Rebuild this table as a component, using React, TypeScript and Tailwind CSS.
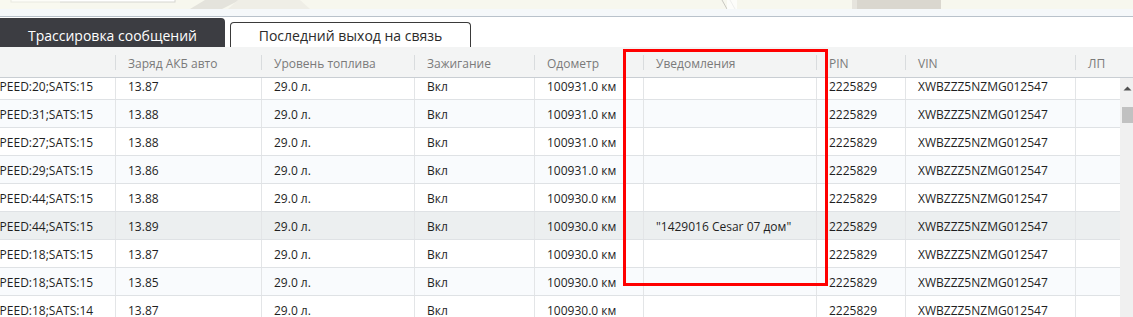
const cols = [
  { label: "", w: "w-[115px]" },
  { label: "Заряд АКБ авто", w: "w-[146px]" },
  { label: "Уровень топлива", w: "w-[153px]" },
  { label: "Зажигание", w: "w-[120px]" },
  { label: "Одометр", w: "w-[109px]" },
  { label: "Уведомления", w: "w-[173px]" },
  { label: "PIN", w: "w-[89px]" },
  { label: "VIN", w: "w-[170px]" },
  { label: "ЛП", w: "w-[45px]" },
];

const rows = [
  ["SPEED:20;SATS:15", "13.87", "100931.0 км", ""],
  ["SPEED:31;SATS:15", "13.88", "100931.0 км", ""],
  ["SPEED:27;SATS:15", "13.88", "100931.0 км", ""],
  ["SPEED:29;SATS:15", "13.86", "100931.0 км", ""],
  ["SPEED:44;SATS:15", "13.88", "100930.0 км", ""],
  ["SPEED:44;SATS:15", "13.89", "100930.0 км", "\"1429016 Cesar 07 дом\""],
  ["SPEED:18;SATS:15", "13.87", "100930.0 км", ""],
  ["SPEED:18;SATS:15", "13.85", "100930.0 км", ""],
  ["SPEED:18;SATS:14", "13.87", "100930.0 км", ""],
];

const MapStrip = () => (
  <svg width="1133" height="9" className="block">
    <rect width="1133" height="9" fill="#f7f7ee" />
    <rect x="11" y="-4" width="164" height="6" fill="#ffffff" stroke="#d6d6d0" />
    <path d="M190 9 L205 0 L240 0 L222 9 Z" fill="#e4e3dc" />
    <path d="M228 9 L238 0 L300 0 L310 9 Z" fill="#efeee6" />
    <path d="M722 0 L727 9 M730 0 L735 9" stroke="#c9c8c2" strokeWidth="1" />
    <rect x="727" y="0" width="10" height="9" fill="#ffffff" opacity="0.7" />
    <rect x="852" y="0" width="5" height="9" fill="#e6e4dd" />
    <rect x="857" y="0" width="84" height="9" fill="#dad7cf" />
    <rect x="0" y="0" width="60" height="9" fill="#fbfbf2" opacity="0.5" />
  </svg>
);

const App = () => {
  return (
    <div className="relative w-[1133px] h-[317px] overflow-hidden bg-white font-['Open_Sans',sans-serif]">
      <MapStrip />
      <div className="h-[8px] bg-[#f5f8fa] border-b border-[#b9c2cb]" />

      <div className="h-[30px] flex items-end">
        <div className="w-[225px] h-[29px] pt-[5px] bg-[#3c3d42] rounded-tr-[4px] flex items-center justify-center text-white text-[14px]">
          Трассировка сообщений
        </div>
        <div className="ml-[5px] w-[241px] h-[25px] pt-[1px] bg-white border border-b-0 border-[#3a3a3a] rounded-t-[4px] flex items-center justify-center text-[#2b2b2b] text-[14px]">
          Последний выход на связь
        </div>
      </div>

      <div className="h-[31px] flex items-center bg-[#f3f4f4] border-b border-[#c9ced3] text-[12px] text-[#7a7a7a]">
        {cols.map((c, i) => (
          <div key={i} className={`${c.w} h-full flex items-center shrink-0`}>
            {i > 0 && <div className="w-px h-[15px] bg-[#d9dcde] shrink-0" />}
            <span className="pl-3 pt-[3px] whitespace-nowrap">{c.label}</span>
          </div>
        ))}
      </div>

      <div className="flex h-[239px]">
        <div className="w-[1120px] overflow-hidden">
          <div className="-mt-[6px]">
            {rows.map((r, ri) => (
              <div
                key={ri}
                className={`flex h-[28px] border-b border-[#dfe2e5] text-[12px] text-[#1f1f1f] ${
                  ri === 5 ? "bg-[#eceff0]" : ri % 2 === 1 ? "bg-[#f9fbfd]" : "bg-white"
                }`}
              >
                {[r[0], r[1], "29.0 л.", "Вкл", r[2], r[3], "2225829", "XWBZZZ5NZMG012547", ""].map((v, ci) => (
                  <div
                    key={ci}
                    className={`${cols[ci].w} shrink-0 h-full flex items-center overflow-hidden whitespace-nowrap pt-[3px] ${
                      ci > 0 ? "border-l border-[#e3e5e7] pl-3" : ""
                    }`}
                  >
                    <span className={ci === 0 ? "-ml-[7px]" : ""}>{v}</span>
                  </div>
                ))}
              </div>
            ))}
          </div>
        </div>

        <div className="w-[13px] bg-[#f0f0f0] flex flex-col items-start">
          <div className="w-full h-[20px] flex items-center justify-end pr-[1px]">
            <svg width="9" height="5" viewBox="0 0 9 5">
              <path d="M0.5 4.5 L4.5 0.5 L8.5 4.5 Z" fill="#505050" />
            </svg>
          </div>
          <div className="ml-[2px] mt-[9px] w-[11px] h-[16px] bg-[#c1c1c1]" />
        </div>
      </div>

      <div className="absolute left-[623px] top-[49px] w-[205px] h-[237px] border-[3px] border-[#ff0000]" />
    </div>
  );
};

export default App;
